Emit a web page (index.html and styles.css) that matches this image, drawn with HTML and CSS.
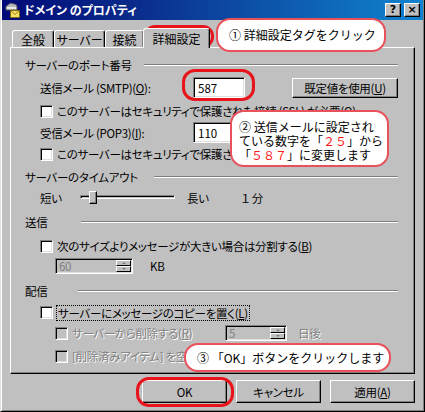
FILE: index.html
```html
<!DOCTYPE html>
<html lang="ja">
<head>
<meta charset="utf-8">
<title>ドメイン のプロパティ</title>
<link rel="stylesheet" href="styles.css">
</head>
<body>
<div class="window">
  <div class="titlebar">
    <svg class="ticon" width="16" height="16" viewBox="0 0 16 16">
      <path d="M2 7 Q1 4 4 3 Q6 0 10 2 Q13 2 13 5 L13 8 L2 8 Z" fill="#b8b8b8" stroke="#606060" stroke-width="0.8"/>
      <rect x="3" y="5" width="9" height="2" fill="#e8e8e8"/>
      <rect x="6.5" y="8.5" width="9" height="7" fill="#f8e060" stroke="#806000" stroke-width="0.8"/>
      <path d="M6.5 8.5 L11 12.5 L15.5 8.5" fill="none" stroke="#806000" stroke-width="0.8"/>
    </svg>
    <span class="title">ドメイン のプロパティ</span>
    <span class="tbtns"><span class="tbtn">?</span><span class="tbtn">×</span></span>
  </div>

  <div class="content">
    <div class="tabs">
      <div class="tab t1">全般</div>
      <div class="tab t2">サーバー</div>
      <div class="tab t3">接続</div>
      <div class="tab active">詳細設定</div>
    </div>

    <div class="panel">
      <div class="legend m10"><span>サーバーのポート番号</span><i class="rule w1"></i></div>
      <div class="row m5 h21">
        <span class="lbl">送信メール (SMTP)(<u>O</u>):</span>
        <span class="input">587</span>
        <span class="btn def">既定値を使用(<u>U</u>)</span>
      </div>
      <div class="row m6 h14"><span class="cb"></span><span>このサーバーはセキュリティで保護された接続 (SSL) が必要(<u>Q</u>)</span></div>
      <div class="row m4 h21">
        <span class="lbl">受信メール (POP3)(<u>I</u>):</span>
        <span class="input">110</span>
      </div>
      <div class="row m4 h14"><span class="cb"></span><span>このサーバーはセキュリティで保護された接続 (SSL) が必要(<u>C</u>)</span></div>

      <div class="legend m9"><span>サーバーのタイムアウト</span><i class="rule w2"></i></div>
      <div class="row m4 h20">
        <span class="slbl">短い</span>
        <span class="slider"><span class="track"></span><span class="thumb"></span></span>
        <span class="llbl">長い</span>
        <span>１ 分</span>
      </div>

      <div class="legend m7"><span>送信</span><i class="rule w3"></i></div>
      <div class="row m10 h14"><span class="cb"></span><span>次のサイズよりメッセージが大きい場合は分割する(<u>B</u>)</span></div>
      <div class="row sub m5 h16">
        <span class="spin s60"><span class="val">60</span><span class="arrows"><i class="ab"><b class="up"></b></i><i class="ab"><b class="dn"></b></i></span></span>
        <span class="unit">KB</span>
      </div>

      <div class="legend m10"><span>配信</span><i class="rule w4"></i></div>
      <div class="row m7 h15"><span class="cb"></span><span class="focus">サーバーにメッセージのコピーを置く(<u>L</u>)</span></div>
      <div class="row sub m5 h16">
        <span class="cb dis"></span><span class="distext dlbl">サーバーから削除する(<u>R</u>)</span>
        <span class="spin s5"><span class="val">5</span><span class="arrows"><i class="ab"><b class="up"></b></i><i class="ab"><b class="dn"></b></i></span></span>
        <span class="distext unit">日後</span>
      </div>
      <div class="row sub m8 h14"><span class="cb dis"></span><span class="distext">[削除済みアイテム] を空にしたらサーバーから削除(<u>M</u>)</span></div>
    </div>

    <div class="buttons">
      <span class="btn act">OK</span>
      <span class="btn act">キャンセル</span>
      <span class="btn act">適用(<u>A</u>)</span>
    </div>
  </div>

  <div class="ring r1"></div>
  <div class="ring r2"></div>
  <div class="ring r3"></div>

  <div class="callout c1">① 詳細設定タグをクリック</div>
  <div class="callout c2">② 送信メールに設定され<br>ている数字を「<em>２５</em>」から<br>「<em>５８７</em>」に変更します</div>
  <div class="callout c3">③ 「OK」ボタンをクリックします</div>
</div>
</body>
</html>
```

FILE: styles.css
```css
* { box-sizing: border-box; }
html, body { margin: 0; padding: 0; }
body {
  width: 425px;
  height: 412px;
  overflow: hidden;
  background: #c0c0c0;
  font-family: "Noto Sans CJK JP", "Noto Sans", sans-serif;
  font-size: 11.5px;
  line-height: 14px;
  color: #000;
  font-feature-settings: "palt";
  letter-spacing: -0.3px;
}
u { text-decoration: underline; text-underline-offset: 1px; }

.window {
  position: relative;
  width: 425px;
  height: 412px;
  background: #c0c0c0;
  border-left: 1px solid #dfdfdf;
  border-right: 1px solid #000;
  border-bottom: 1px solid #000;
  box-shadow: inset 1px 0 #fff, inset -1px -1px #808080;
  display: flex;
  flex-direction: column;
}

/* title bar */
.titlebar {
  height: 20px;
  margin: 0 1px;
  background: linear-gradient(to right, #000a78 0%, #0a2a8a 30%, #1084d0 100%);
  display: flex;
  align-items: center;
  padding-left: 2px;
  color: #fff;
}
.ticon { flex: none; }
.title {
  margin-left: 4px;
  font-weight: bold;
  font-size: 12px;
  letter-spacing: 0;
}
.tbtns { margin-left: auto; display: flex; gap: 3px; margin-right: 3px; }
.tbtn {
  width: 16px;
  height: 14px;
  background: #c0c0c0;
  border-top: 1px solid #fff;
  border-left: 1px solid #fff;
  border-right: 1px solid #000;
  border-bottom: 1px solid #000;
  box-shadow: inset -1px -1px #808080;
  color: #000;
  font-family: "DejaVu Sans", sans-serif;
  font-weight: bold;
  font-size: 11px;
  line-height: 12px;
  text-align: center;
  letter-spacing: 0;
}

/* content */
.content {
  flex: 1;
  padding: 8px 9px 0 9px;
  display: flex;
  flex-direction: column;
}
.tabs {
  display: flex;
  align-items: flex-end;
  height: 20px;
  margin-left: 2px;
  margin-bottom: -1px;
  position: relative;
  z-index: 1;
  font-size: 12px;
  letter-spacing: 0;
}
.tab {
  height: 17px;
  margin-bottom: 1px;
  border-top: 1px solid #fff;
  border-left: 1px solid #fff;
  border-right: 1px solid #000;
  box-shadow: inset -1px 0 #808080;
  border-radius: 3px 3px 0 0;
  display: flex;
  align-items: center;
  justify-content: center;
  background: #c0c0c0;
  padding-top: 2px;
}
.t1 { width: 42px; }
.t2 { width: 51px; }
.t3 { width: 39px; }
.tab.active {
  height: 20px;
  margin-bottom: 0;
  width: 67px;
  margin-left: -1px;
  padding-top: 0;
}

.panel {
  height: 327px;
  border-top: 1px solid #fff;
  border-left: 1px solid #fff;
  border-right: 1px solid #000;
  border-bottom: 1px solid #000;
  box-shadow: inset -1px -1px #808080;
  padding: 0 16px 0 14px;
  display: flex;
  flex-direction: column;
}

.legend {
  height: 14px;
  display: flex;
  align-items: center;
  flex: none;
}
.rule {
  margin-left: auto;
  height: 2px;
  border-top: 1px solid #808080;
  border-bottom: 1px solid #fff;
}
.w1 { width: 254px; }
.w2 { width: 244px; }
.w3 { width: 317px; }
.w4 { width: 320px; }

.row {
  display: flex;
  align-items: center;
  margin-left: 15px;
  flex: none;
  white-space: nowrap;
}
.row.sub { margin-left: 30px; }
.m4 { margin-top: 4px; }
.m5 { margin-top: 5px; }
.m6 { margin-top: 6px; }
.m7 { margin-top: 7px; }
.m8 { margin-top: 8px; }
.m9 { margin-top: 9px; }
.m10 { margin-top: 10px; }
.h14 { height: 14px; }
.h15 { height: 15px; }
.h16 { height: 16px; }
.h20 { height: 20px; }
.h21 { height: 21px; }

.lbl { width: 153px; }
.input {
  width: 52px;
  height: 21px;
  background: #fff;
  border-top: 1px solid #808080;
  border-left: 1px solid #808080;
  border-right: 1px solid #fff;
  border-bottom: 1px solid #fff;
  box-shadow: inset 1px 1px #000, inset -1px -1px #dfdfdf;
  padding: 3px 0 0 4px;
  line-height: 14px;
  letter-spacing: 0;
}

.btn {
  display: flex;
  align-items: center;
  justify-content: center;
  background: #c0c0c0;
  border-top: 1px solid #fff;
  border-left: 1px solid #fff;
  border-right: 1px solid #000;
  border-bottom: 1px solid #000;
  box-shadow: inset -1px -1px #808080;
}
.btn.def { width: 106px; height: 20px; margin-left: 47px; }

.cb {
  flex: none;
  width: 13px;
  height: 13px;
  background: #fff;
  border-top: 1px solid #808080;
  border-left: 1px solid #808080;
  border-right: 1px solid #fff;
  border-bottom: 1px solid #fff;
  box-shadow: inset 1px 1px #000, inset -1px -1px #dfdfdf;
  margin-right: 4px;
}
.cb.dis { background: #c0c0c0; }

.distext { color: #808080; text-shadow: 1px 1px #fff; }
.dlbl { width: 153px; }

.focus { outline: 1px dotted #000; outline-offset: 0; padding: 0 1px; }

/* slider */
.slbl { width: 40px; }
.slider { position: relative; width: 95px; height: 20px; }
.track {
  position: absolute;
  left: 0; right: 0; top: 7px;
  height: 4px;
  border-top: 1px solid #808080;
  border-left: 1px solid #808080;
  border-right: 1px solid #fff;
  border-bottom: 1px solid #fff;
  box-shadow: inset 1px 1px #000;
}
.thumb {
  position: absolute;
  left: 9px; top: 3px;
  width: 8px; height: 13px;
  background: #c0c0c0;
  border-top: 1px solid #fff;
  border-left: 1px solid #fff;
  border-right: 1px solid #000;
  border-bottom: 1px solid #000;
  box-shadow: inset -1px -1px #808080;
}
.llbl { margin-left: 12px; width: 54px; }

/* spin */
.spin {
  display: flex;
  height: 16px;
  background: #c0c0c0;
  border-top: 1px solid #808080;
  border-left: 1px solid #808080;
  border-right: 1px solid #fff;
  border-bottom: 1px solid #fff;
  box-shadow: inset 1px 1px #000, inset -1px -1px #dfdfdf;
  padding: 1px;
}
.s60 { width: 78px; }
.s5 { width: 62px; }
.val { flex: 1; color: #808080; padding-left: 2px; line-height: 13px; }
.arrows { width: 15px; display: flex; flex-direction: column; }
.ab {
  flex: 1;
  display: flex;
  align-items: center;
  justify-content: center;
  background: #c0c0c0;
  border-top: 1px solid #fff;
  border-left: 1px solid #fff;
  border-right: 1px solid #000;
  border-bottom: 1px solid #000;
}
.ab b { width: 0; height: 0; border-left: 2px solid transparent; border-right: 2px solid transparent; }
.ab .up { border-bottom: 2px solid #808080; }
.ab .dn { border-top: 2px solid #808080; }
.unit { margin-left: 17px; }
.s5 + .unit { margin-left: 11px; }

/* buttons */
.buttons {
  display: flex;
  justify-content: flex-end;
  gap: 9px;
  margin-top: 6px;
}
.btn.act { width: 85px; height: 23px; }

/* overlays */
.ring {
  position: absolute;
  border: 3px solid #e8141c;
  border-radius: 13px;
}
.r1 { left: 143px; top: 25px; width: 70px; height: 23px; border-radius: 11px; }
.r2 { left: 181px; top: 69px; width: 73px; height: 32px; }
.r3 { left: 135px; top: 377px; width: 98px; height: 30px; }

.callout {
  position: absolute;
  background: #fff;
  border: 2px solid #e8505a;
  border-radius: 14px;
  font-size: 12px;
  font-feature-settings: normal;
  letter-spacing: 0;
  white-space: nowrap;
}
.callout em { font-style: normal; color: #ff1a1a; }
.c1 { left: 215px; top: 18px; width: 170px; height: 34px; padding: 8px 0 0 11px; }
.c2 { left: 229px; top: 110px; width: 159px; height: 57px; padding: 8px 0 0 7px; line-height: 14px; }
.c3 { left: 183px; top: 343px; width: 207px; height: 29px; padding: 6px 0 0 11px; }
```
